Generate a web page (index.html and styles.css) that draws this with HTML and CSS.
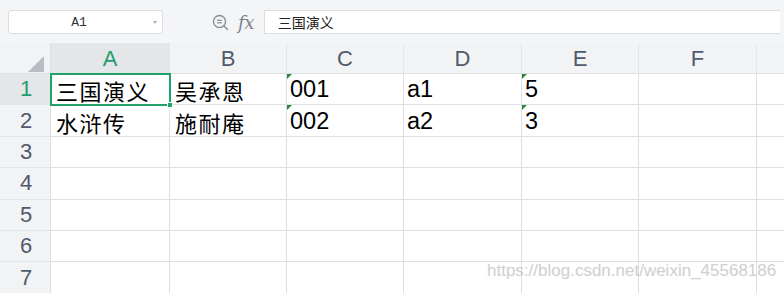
FILE: index.html
```html
<!DOCTYPE html>
<html>
<head>
<meta charset="utf-8">
<link rel="stylesheet" href="styles.css">
</head>
<body>
<div class="app">
  <div class="toolbar">
    <div class="namebox"><span class="nb-text">A1</span><span class="nb-arrow"></span></div>
    <div class="tools">
      <svg class="zoom-ic" width="17" height="17" viewBox="0 0 17 17">
        <circle cx="7.5" cy="7.5" r="6" fill="none" stroke="#8a8f98" stroke-width="1.4"/>
        <line x1="11.8" y1="11.8" x2="15.5" y2="15.5" stroke="#8a8f98" stroke-width="1.6" stroke-linecap="round"/>
        <line x1="5" y1="6.3" x2="10" y2="6.3" stroke="#8a8f98" stroke-width="1.2"/>
        <line x1="5" y1="8.8" x2="10" y2="8.8" stroke="#8a8f98" stroke-width="1.2"/>
      </svg>
      <span class="fx">fx</span>
    </div>
    <div class="formula">三国演义</div>
  </div>
  <div class="sheet">
    <div class="corner"><span class="tri"></span></div>
    <div class="colh sel">A</div>
    <div class="colh">B</div>
    <div class="colh">C</div>
    <div class="colh">D</div>
    <div class="colh">E</div>
    <div class="colh">F</div>
    <div class="colh last"></div>

    <div class="rowh sel">1</div>
    <div class="cell cjk active">三国演义<span class="handle"></span></div>
    <div class="cell cjk">吴承恩</div>
    <div class="cell num mark">001</div>
    <div class="cell num">a1</div>
    <div class="cell num mark">5</div>
    <div class="cell"></div>
    <div class="cell last"></div>

    <div class="rowh">2</div>
    <div class="cell cjk">水浒传</div>
    <div class="cell cjk">施耐庵</div>
    <div class="cell num mark">002</div>
    <div class="cell num">a2</div>
    <div class="cell num mark">3</div>
    <div class="cell"></div>
    <div class="cell last"></div>

    <div class="rowh">3</div>
    <div class="cell"></div><div class="cell"></div><div class="cell"></div><div class="cell"></div><div class="cell"></div><div class="cell"></div><div class="cell last"></div>
    <div class="rowh">4</div>
    <div class="cell"></div><div class="cell"></div><div class="cell"></div><div class="cell"></div><div class="cell"></div><div class="cell"></div><div class="cell last"></div>
    <div class="rowh">5</div>
    <div class="cell"></div><div class="cell"></div><div class="cell"></div><div class="cell"></div><div class="cell"></div><div class="cell"></div><div class="cell last"></div>
    <div class="rowh">6</div>
    <div class="cell"></div><div class="cell"></div><div class="cell"></div><div class="cell"></div><div class="cell"></div><div class="cell"></div><div class="cell last"></div>
    <div class="rowh">7</div>
    <div class="cell"></div><div class="cell"></div><div class="cell"></div><div class="cell"></div><div class="cell"></div><div class="cell"></div><div class="cell last"></div>
  </div>
  <div class="watermark">https://blog.csdn.net/weixin_45568186</div>
</div>
</body>
</html>
```

FILE: styles.css
```css
* { box-sizing: border-box; }
html, body { margin: 0; padding: 0; }
body {
  width: 784px;
  height: 293px;
  overflow: hidden;
  background: #ffffff;
  font-family: "Liberation Sans", Arial, sans-serif;
}
.app {
  position: relative;
  width: 784px;
  height: 293px;
  overflow: hidden;
}
.toolbar {
  height: 43px;
  background: #f4f5f7;
  display: flex;
  align-items: flex-start;
  padding: 10px 4px 0 8px;
}
.namebox {
  width: 155px;
  height: 24px;
  background: #ffffff;
  border: 1px solid #dadde2;
  border-radius: 3px;
  display: flex;
  align-items: center;
  justify-content: center;
  position: relative;
}
.nb-text {
  font-family: "Liberation Mono", "DejaVu Sans Mono", monospace;
  font-size: 13px;
  color: #333;
  margin-left: -13px;
}
.nb-arrow {
  position: absolute;
  right: 5px;
  top: 10px;
  width: 0; height: 0;
  border-left: 2.5px solid transparent;
  border-right: 2.5px solid transparent;
  border-top: 3px solid #a9adb4;
}
.tools {
  display: flex;
  align-items: center;
  height: 24px;
  padding-left: 49px;
  gap: 9px;
}
.zoom-ic { display: block; margin-top: 1px; }
.fx {
  font-family: "DejaVu Serif", "Liberation Serif", serif;
  font-style: italic;
  font-size: 18px;
  color: #7c8189;
  letter-spacing: -0.5px;
}
.formula {
  margin-left: 10px;
  flex: 1;
  height: 24px;
  background: #fff;
  border: 1px solid #dadde2;
  border-right: none;
  padding-left: 13px;
  font-family: "Noto Sans CJK SC", sans-serif;
  font-size: 14px;
  line-height: 22px;
  color: #222;
}
.sheet {
  display: grid;
  grid-template-columns: 51px 119px 117px 117px 118px 117px 118px 1fr;
  grid-template-rows: 31px repeat(7, 31.4px);
}
.corner {
  background: #f2f3f5;
  border-right: 1px solid #dcdfe3;
  border-bottom: 1px solid #dcdfe3;
  position: relative;
}
.tri {
  position: absolute;
  right: 6px;
  bottom: 1px;
  width: 0; height: 0;
  border-left: 16px solid transparent;
  border-bottom: 16px solid #b9bcc2;
}
.colh {
  background: #f2f3f5;
  border-right: 1px solid #e3e5e9;
  border-bottom: 1px solid #dcdfe3;
  display: flex;
  align-items: center;
  justify-content: center;
  font-size: 22px;
  color: #4f5a6b;
  padding-top: 1px;
}
.colh.sel { background: #e4e6ea; color: #1f9e6e; }
.colh.last { border-right: none; }
.rowh {
  background: #f2f3f5;
  border-right: 1px solid #dcdfe3;
  border-bottom: 1px solid #e3e5e9;
  display: flex;
  align-items: center;
  justify-content: center;
  font-size: 22px;
  color: #4f5a6b;
  padding-left: 2px;
}
.rowh.sel { background: #e4e6ea; color: #1f9e6e; }
.cell {
  border-right: 1px solid #dcdfe3;
  border-bottom: 1px solid #dcdfe3;
  display: flex;
  align-items: center;
  padding-left: 5px;
  color: #111;
  position: relative;
  white-space: nowrap;
}
.cell.last { border-right: none; }
.cjk {
  font-family: "Noto Sans CJK SC", sans-serif;
  font-weight: 400;
  font-size: 22px;
  letter-spacing: 1.5px;
  padding-top: 2px;
  color: #000;
}
.num {
  font-family: "Liberation Sans", Arial, sans-serif;
  font-size: 23.5px;
  padding-left: 3px;
  padding-top: 1px;
  color: #000;
}
.mark::before {
  content: "";
  position: absolute;
  left: 0;
  top: 0;
  width: 0; height: 0;
  border-top: 5px solid #2a8a3c;
  border-right: 5px solid transparent;
}
.active {
  outline: 2.5px solid #21a26b;
  outline-offset: -1.5px;
  z-index: 2;
}
.handle {
  position: absolute;
  right: -4px;
  bottom: -4px;
  width: 6px;
  height: 6px;
  background: #21a26b;
  border: 1px solid #fff;
}
.watermark {
  position: absolute;
  left: 487px;
  top: 261px;
  font-size: 17px;
  color: rgba(185,185,185,0.55);
  text-shadow: 0 0 1px rgba(200,200,200,0.4);
}
```
